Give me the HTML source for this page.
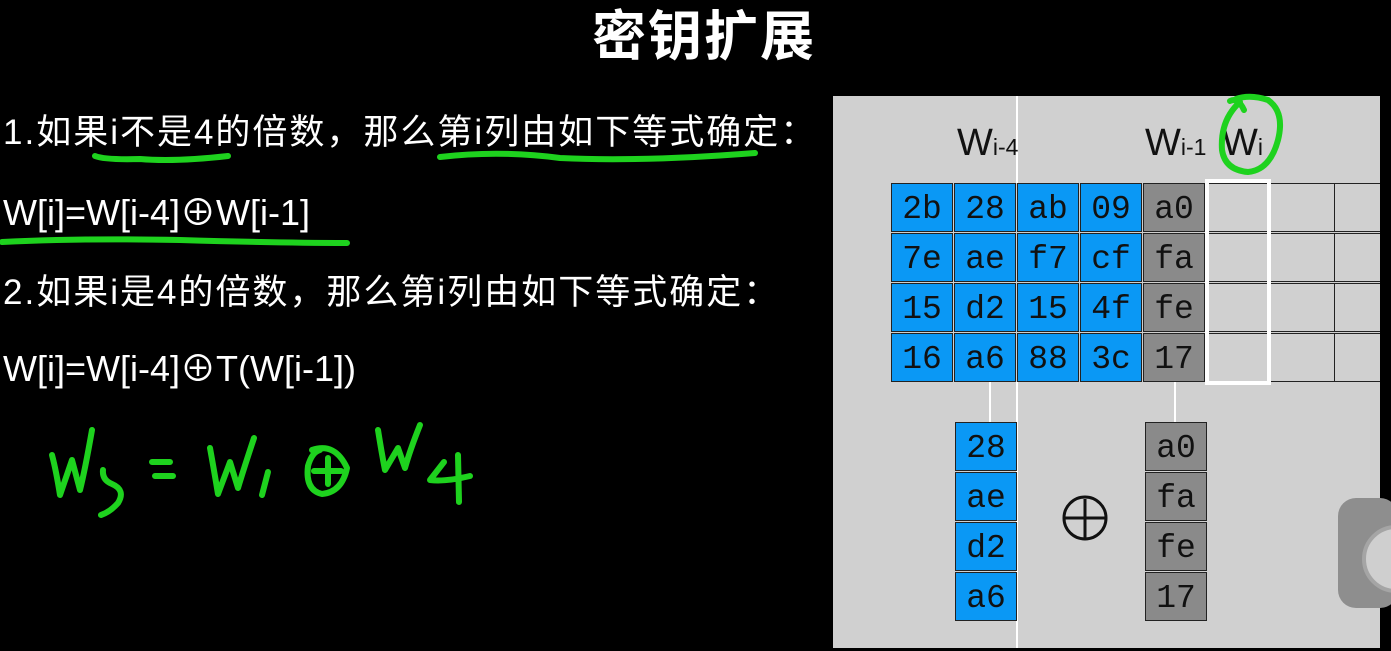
<!DOCTYPE html>
<html><head><meta charset="utf-8"><style>
body{margin:0;width:1391px;height:651px;background:#000;overflow:hidden;position:relative;font-family:"Liberation Sans","Noto Sans CJK SC",sans-serif;color:#fff}
.t{position:absolute;white-space:nowrap}
.cjk{font-size:35px;letter-spacing:2px}
.f{font-size:36px}
#panel{position:absolute;left:833px;top:96px;width:547px;height:552px;background:#d0d0d0;overflow:hidden}
.c{position:absolute;width:62px;height:49px;border:1px solid #222;box-sizing:border-box;font-family:"Liberation Mono",monospace;font-size:33px;color:#111;text-align:center;line-height:51px}
.b{background:#0a98f5}.g{background:#8a8a8a}.e{background:#d0d0d0}
.lab{position:absolute;font-size:38px;color:#111}
.lab sub{font-size:23px;vertical-align:baseline}
</style></head><body>
<div class="t" style="left:592px;top:-8px;font-size:54px;font-weight:bold;letter-spacing:2px">密钥扩展</div>
<div class="t cjk" style="left:3px;top:104px">1.如果i不是4的倍数，那么第i列由如下等式确定：</div>
<div class="t f" style="left:3px;top:184px">W[i]=W[i-4]⊕W[i-1]</div>
<div class="t cjk" style="left:3px;top:264px">2.如果i是4的倍数，那么第i列由如下等式确定：</div>
<div class="t f" style="left:3px;top:340px">W[i]=W[i-4]⊕T(W[i-1])</div>

<div id="panel">
<div style="position:absolute;left:58px;top:87px">
<div class="c b" style="left:0;top:0">2b</div><div class="c b" style="left:63px;top:0">28</div><div class="c b" style="left:126px;top:0">ab</div><div class="c b" style="left:189px;top:0">09</div><div class="c g" style="left:252px;top:0">a0</div>
<div class="c b" style="left:0;top:50px">7e</div><div class="c b" style="left:63px;top:50px">ae</div><div class="c b" style="left:126px;top:50px">f7</div><div class="c b" style="left:189px;top:50px">cf</div><div class="c g" style="left:252px;top:50px">fa</div>
<div class="c b" style="left:0;top:100px">15</div><div class="c b" style="left:63px;top:100px">d2</div><div class="c b" style="left:126px;top:100px">15</div><div class="c b" style="left:189px;top:100px">4f</div><div class="c g" style="left:252px;top:100px">fe</div>
<div class="c b" style="left:0;top:150px">16</div><div class="c b" style="left:63px;top:150px">a6</div><div class="c b" style="left:126px;top:150px">88</div><div class="c b" style="left:189px;top:150px">3c</div><div class="c g" style="left:252px;top:150px">17</div>
<div class="c e" style="left:315px;top:0"></div><div class="c e" style="left:315px;top:50px"></div><div class="c e" style="left:315px;top:100px"></div><div class="c e" style="left:315px;top:150px"></div>
<div class="c e" style="left:378px;top:0;width:66px"></div><div class="c e" style="left:378px;top:50px;width:66px"></div><div class="c e" style="left:378px;top:100px;width:66px"></div><div class="c e" style="left:378px;top:150px;width:66px"></div>
<div class="c e" style="left:443px;top:0;width:80px"></div><div class="c e" style="left:443px;top:50px;width:80px"></div><div class="c e" style="left:443px;top:100px;width:80px"></div><div class="c e" style="left:443px;top:150px;width:80px"></div>
<div style="position:absolute;left:314px;top:-4px;width:66px;height:206px;border:4px solid #fff;box-sizing:border-box"></div>
</div>
</div>
<div style="position:absolute;left:1016px;top:96px;width:2px;height:87px;background:#fff"></div>
<div style="position:absolute;left:1016px;top:382px;width:2px;height:266px;background:#fff"></div>
<div style="position:absolute;left:989px;top:382px;width:2px;height:40px;background:#fff"></div>
<div style="position:absolute;left:1174px;top:382px;width:2px;height:40px;background:#fff"></div>
<div class="lab" style="left:957px;top:122px">W<sub>i-4</sub></div>
<div class="lab" style="left:1145px;top:122px">W<sub>i-1</sub></div>
<div class="lab" style="left:1222px;top:122px">W<sub>i</sub></div>

<div style="position:absolute;left:955px;top:422px">
<div class="c b" style="left:0;top:0">28</div><div class="c b" style="left:0;top:50px">ae</div><div class="c b" style="left:0;top:100px">d2</div><div class="c b" style="left:0;top:150px">a6</div>
</div>
<div style="position:absolute;left:1145px;top:422px">
<div class="c g" style="left:0;top:0">a0</div><div class="c g" style="left:0;top:50px">fa</div><div class="c g" style="left:0;top:100px">fe</div><div class="c g" style="left:0;top:150px">17</div>
</div>
<svg style="position:absolute;left:1060px;top:494px" width="50" height="50"><circle cx="25" cy="24" r="21" fill="none" stroke="#111" stroke-width="3"/><path d="M25 5V44M5 24H46" stroke="#111" stroke-width="3"/></svg>

<div style="position:absolute;left:1338px;top:498px;width:60px;height:110px;border-radius:18px;background:#8e8e8e"></div>
<div style="position:absolute;left:1362px;top:525px;width:60px;height:60px;border-radius:50%;background:#cfcfcf;border:4px solid #a5a5a5"></div>

<svg style="position:absolute;left:0;top:0" width="1391" height="651" fill="none" stroke="#1ed21e" stroke-width="6" stroke-linecap="round" stroke-linejoin="round">
<path d="M95 156Q105 160 140 159Q175 162 228 156"/>
<path d="M440 157Q500 150 560 158Q640 162 755 153"/>
<path d="M2 242Q80 238 180 240Q280 243 347 243"/>
<path d="M1230 101Q1238 97 1244 110M1236 99Q1250 94 1268 100Q1285 112 1278 140Q1270 170 1248 172Q1225 170 1222 150Q1220 120 1240 102"/>
<path d="M52 455Q56 470 60 495L72 460L80 490Q85 470 92 430"/>
<path d="M103 470Q102 480 112 484Q126 490 118 503Q110 512 101 515"/>
<path d="M152 462H170M155 476H173"/>
<path d="M210 448Q214 470 218 494L230 462L238 488Q244 468 254 438"/>
<path d="M268 472L262 495"/>
<path d="M312 450Q335 442 347 468Q342 492 322 494Q305 490 308 466Q312 452 320 450M328 458V484M314 471H341"/>
<path d="M378 430Q382 455 385 470L398 448L405 468Q410 450 420 425"/>
<path d="M444 462L430 480Q445 482 470 476M458 455L459 502"/>
</svg>
</body></html>
